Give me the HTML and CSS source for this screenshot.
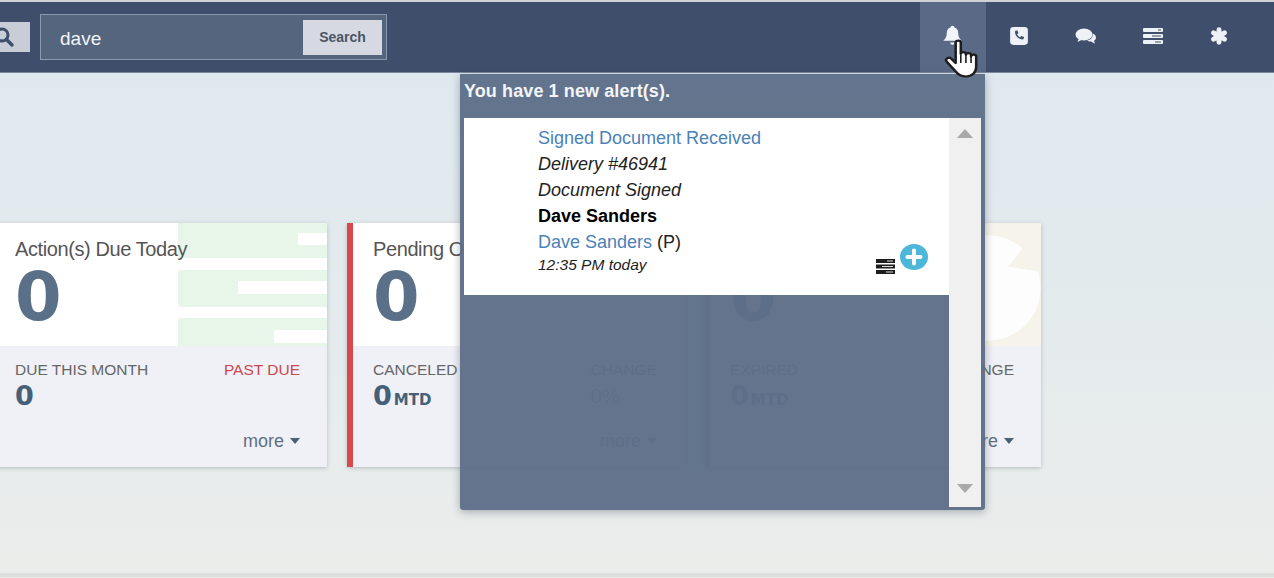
FILE: index.html
```html
<!DOCTYPE html>
<html lang="en">
<head>
    <meta charset="UTF-8">
    <meta name="viewport" content="width=device-width, initial-scale=1.0">
    <title>Dashboard</title>
    <link rel="stylesheet" href="styles.css">
</head>
<body>
    <header class="topbar">
        <div class="search-area">
            <button class="search-toggle">
                <svg width="24" height="24" viewBox="0 0 24 24"><circle cx="5" cy="10" r="6" fill="none" stroke="#3d4f6b" stroke-width="3"/><path d="M9.5 14.5L15 20" stroke="#3d4f6b" stroke-width="3.4" stroke-linecap="round"/></svg>
            </button>
            <form class="search-box">
                <span class="search-term">dave</span>
                <button class="search-button" type="button">Search</button>
            </form>
        </div>
        <nav class="top-icons">
            <a class="top-icon active">
                <svg width="23" height="23" viewBox="0 0 20 20"><path d="M10 1.5c1 0 1.6.7 1.7 1.5 2.4.7 3.3 2.7 3.3 5 0 3 1 4.500 3 6.500H2c2-2 3-3.500 3-6.500 0-2.300.9-4.300 3.300-5 .1-.8.700-1.500 1.700-1.500z" fill="#f2f4f7"/><path d="M8 16h4a2 2 0 0 1-4 0z" fill="#f2f4f7"/></svg>
            </a>
            <a class="top-icon">
                <svg width="20" height="20" viewBox="0 0 18 18"><rect x="1" y="1" width="16" height="16" rx="3" fill="#eef1f5"/><path d="M5.500 4.500l2-.6 1 2.600-1.200 1c.5 1.200 1.500 2.200 2.700 2.700l1-1.200 2.600 1-.6 2c-4 .8-8.300-3.500-7.500-7.500z" fill="#3f4f6b"/></svg>
            </a>
            <a class="top-icon">
                <svg width="22" height="18" viewBox="0 0 22 18"><ellipse cx="9" cy="7.500" rx="8.500" ry="6" fill="#eef1f5"/><path d="M4 11l-1.500 4 5-2.500z" fill="#eef1f5"/><path d="M17.500 6.500c2.500 1 3.500 2.500 3.500 4 0 1.500-.8 2.600-2 3.300l1 3-4-2.300c-1.500 0-3-.2-4-1 3.500-.5 6.500-3.500 5.500-7z" fill="#eef1f5"/></svg>
            </a>
            <a class="top-icon icon-server">
                <svg width="20" height="16" viewBox="0 0 20 16"><rect width="20" height="4" rx="1" fill="#eef1f5"/><rect y="6" width="20" height="4" rx="1" fill="#eef1f5"/><rect y="12" width="20" height="4" rx="1" fill="#eef1f5"/><path d="M15 2h3M9 8h9M12 14h6" stroke="#3f4f6b" stroke-width="1"/></svg>
            </a>
            <a class="top-icon">
                <svg width="18" height="18" viewBox="0 0 16 16"><path d="M8 2.500v11M3.200 5.200l9.600 5.600M12.800 5.200l-9.600 5.600" stroke="#eef1f5" stroke-width="4.400" stroke-linecap="round"/></svg>
            </a>
        </nav>
    </header>

    <main class="content">
        <section class="cards">
            <article class="card card-first">
                <div class="card-top">
                    <div class="card-art art-green"><i></i><i></i><i></i></div>
                    <h2 class="card-title">Action(s) Due Today</h2>
                    <div class="card-count">0</div>
                </div>
                <div class="card-bottom">
                    <div class="stats">
                        <div><div class="stat-label">DUE THIS MONTH</div><div class="stat-value">0</div></div>
                        <div class="stat-label past-due">PAST DUE</div>
                    </div>
                    <a class="more">more <span class="caret"></span></a>
                </div>
            </article>
            <article class="card card-red">
                <div class="card-top">
                    <h2 class="card-title">Pending O</h2>
                    <div class="card-count">0</div>
                </div>
                <div class="card-bottom">
                    <div class="stats">
                        <div><div class="stat-label">CANCELED</div><div class="stat-value">0<small>MTD</small></div></div>
                        <div><div class="stat-label">CHANGE</div><div class="stat-pct">0%</div></div>
                    </div>
                    <a class="more">more <span class="caret"></span></a>
                </div>
            </article>
            <article class="card card-olive">
                <div class="card-top">
                    <div class="card-art art-beige"></div>
                    <div class="card-count">0</div>
                </div>
                <div class="card-bottom">
                    <div class="stats">
                        <div><div class="stat-label">EXPIRED</div><div class="stat-value">0<small>MTD</small></div></div>
                        <div class="stat-label">CHANGE</div>
                    </div>
                    <a class="more">more <span class="caret"></span></a>
                </div>
            </article>
        </section>
    </main>
    <div class="footer-line"></div>

    <div class="alerts">
        <div class="alerts-head">You have 1 new alert(s).</div>
        <div class="alerts-body">
            <div class="alerts-list">
                <div class="alert">
                    <a class="alert-link">Signed Document Received</a>
                    <em>Delivery #46941</em>
                    <em>Document Signed</em>
                    <strong>Dave Sanders</strong>
                    <span><a class="alert-link">Dave Sanders</a> (P)</span>
                    <em class="alert-time">12:35 PM today</em>
                    <div class="alert-actions">
                        <svg width="19" height="15" viewBox="0 0 19 15"><rect width="19" height="4" fill="#1c1c1c"/><rect y="5.500" width="19" height="4" fill="#1c1c1c"/><rect y="11" width="19" height="4" fill="#1c1c1c"/><path d="M11 2h6M6 7.500h11M10 13h7" stroke="#ddd" stroke-width="1"/></svg>
                        <svg class="plus" width="28" height="26" viewBox="0 0 28 26"><ellipse cx="14" cy="13" rx="14" ry="13" fill="#4db6d9"/><path d="M14 6.500v13M7.500 13h13" stroke="#fff" stroke-width="4" stroke-linecap="round"/></svg>
                    </div>
                </div>
            </div>
            <div class="scrollbar">
                <span class="arrow-up"></span>
                <span class="arrow-down"></span>
            </div>
        </div>
    </div>

    <svg class="hand" width="41" height="42" viewBox="0 0 36 42" preserveAspectRatio="none">
        <path d="M12 26V5.500C12 3 16.500 3 16.500 5.500V17c0-2.500 4.500-2.500 4.500 0v1c0-2.500 4.500-2.500 4.500 0v1.500c0-2.500 4.500-2.500 4.500 0V30c0 5.500-3.500 9.500-9 9.500-4.500 0-6.500-1.500-9-5l-8-10c-1.700-2.500 1.800-5 4-3z" fill="#fff" stroke="#1d1d1d" stroke-width="2.200" stroke-linejoin="round"/>
        <path d="M16.500 18v8M21 18v8M25.500 19.500V26" stroke="#1d1d1d" stroke-width="1.400"/>
    </svg>
</body>
</html>
```

FILE: styles.css
```css
* {
    box-sizing: border-box;
}

body {
    margin: 0;
    height: 578px;
    overflow: hidden;
    position: relative;
    display: flex;
    flex-direction: column;
    background: linear-gradient(#dce8ef, #ebedeb);
    font-family: "Liberation Sans", Arial, sans-serif;
    color: #555;
}

.topbar {
    height: 73px;
    flex-shrink: 0;
    display: flex;
    justify-content: space-between;
    background: #3f4f6b;
    border-top: 2px solid #cfd3d8;
    border-bottom: 1px solid #7d8a9e;
}

.search-area {
    display: flex;
    align-items: center;
    gap: 10px;
    margin-left: -3px;
}

.search-toggle {
    width: 33px;
    height: 30px;
    padding: 0;
    border: none;
    background: #c8cdd8;
    display: flex;
    align-items: center;
}

.search-box {
    width: 347px;
    height: 46px;
    padding: 0 4px 0 19px;
    display: flex;
    align-items: center;
    justify-content: space-between;
    background: #56657e;
    border: 1.500px solid #8b99ae;
}

.search-term {
    padding-top: 3px;
    font-size: 19px;
    color: #f2f4f7;
}

.search-button {
    width: 79px;
    height: 35px;
    border: none;
    background: #d6d9e2;
    color: #4b5567;
    font: bold 14px "Liberation Sans", Arial, sans-serif;
}

.top-icons {
    display: flex;
    margin-right: 22px;
}

.top-icon {
    width: 66.500px;
    display: flex;
    align-items: center;
    justify-content: center;
    padding-bottom: 3px;
}

.top-icon.active {
    background: #5a6a86;
}

.icon-server {
    padding-left: 2px;
}

.content {
    flex: 1;
    padding-top: 150px;
}

.cards {
    display: flex;
    gap: 20px;
    margin-left: -10px;
}

.card {
    width: 337px;
    height: 244px;
    flex-shrink: 0;
    display: flex;
    flex-direction: column;
    background: #eff1f6;
    box-shadow: 0 1px 4px rgba(90, 100, 110, 0.35);
}

.card-red {
    border-left: 6px solid #d9484c;
}

.card-olive {
    width: 336px;
    margin-left: 1px;
    border-left: 5px solid #8f9b6a;
}

.card-top {
    height: 123px;
    padding: 15px 0 0 20px;
    position: relative;
    overflow: hidden;
    background: #fff;
}

.card-first .card-top,
.card-first .card-bottom {
    padding-left: 25px;
}

.card-art {
    position: absolute;
    top: 0;
    right: 0;
    bottom: 0;
}

.art-green {
    width: 149px;
}

.art-green i {
    display: block;
    position: absolute;
    right: 0;
    width: 149px;
    background: #e8f5e9;
}

.art-green i:nth-child(1) {
    top: 0;
    height: 35px;
    background: linear-gradient(to right, #e8f5e9 120px, #fff 120px) 0 10px / 100% 12px no-repeat, #e8f5e9;
}

.art-green i:nth-child(2) {
    top: 47px;
    height: 37px;
    border-radius: 4px 0 0 4px;
    background: linear-gradient(to right, #e8f5e9 60px, #fff 60px) 0 11px / 100% 13px no-repeat, #e8f5e9;
}

.art-green i:nth-child(3) {
    top: 95px;
    height: 28px;
    border-radius: 4px 0 0 0;
    background: linear-gradient(to right, #e8f5e9 96px, #fff 96px) 0 12px / 100% 13px no-repeat, #e8f5e9;
}

.art-beige {
    width: 140px;
    background:
        conic-gradient(from 38deg at 107px 44px, #f6f3ea 0 60deg, transparent 60deg),
        radial-gradient(circle at 87px 65px, #fdfdfd 52px, #f6f3ea 53px);
}

.card-title {
    position: relative;
    margin: 0;
    font-size: 20px;
    font-weight: normal;
    letter-spacing: -0.4px;
    color: #555;
}

.card-count {
    position: relative;
    margin-top: 0;
    font-family: "DejaVu Sans", sans-serif;
    font-size: 67px;
    font-weight: bold;
    line-height: 72px;
    color: #5a7088;
}

.card-olive .card-count {
    margin-top: 23px;
}

.card-bottom {
    flex: 1;
    padding: 15px 27px 0 20px;
    display: flex;
    flex-direction: column;
}

.stats {
    display: flex;
    justify-content: space-between;
}

.stat-label {
    font-size: 15.500px;
    line-height: 18px;
    color: #666;
}

.past-due {
    color: #c9484e;
}

.stat-value {
    height: 30px;
    margin-top: 2px;
    font-family: "DejaVu Sans", sans-serif;
    font-size: 27px;
    font-weight: bold;
    line-height: 30px;
    color: #466078;
}

.stat-value small {
    margin-left: 2px;
    font-size: 15px;
    line-height: 1;
}

.stat-pct {
    margin-top: 2px;
    font-size: 20px;
    line-height: 30px;
    color: #777;
}

.more {
    margin-top: 20px;
    align-self: flex-end;
    font-size: 18px;
    color: #5f6f80;
}

.caret {
    display: inline-block;
    margin-left: 1px;
    vertical-align: 3px;
    border: 5px solid transparent;
    border-top: 6px solid #4a6075;
    border-bottom: 0;
}

.footer-line {
    height: 4px;
    flex-shrink: 0;
    background: #dcdfde;
    margin-bottom: 1px;
}

.alerts {
    position: absolute;
    top: 74px;
    left: 460px;
    width: 525px;
    height: 436px;
    padding: 0 4px 3px 4px;
    display: flex;
    flex-direction: column;
    background: rgba(94, 110, 136, 0.96);
    border-radius: 0 0 3px 3px;
    box-shadow: 0 2px 8px rgba(60, 70, 85, 0.4);
}

.alerts-head {
    height: 44px;
    padding-top: 7px;
    flex-shrink: 0;
    font-size: 18px;
    font-weight: bold;
    letter-spacing: 0.1px;
    color: #f4f5f8;
}

.alerts-body {
    flex: 1;
    display: flex;
}

.alerts-list {
    width: 485px;
}

.alert {
    height: 177px;
    padding: 7px 0 0 74px;
    position: relative;
    display: flex;
    flex-direction: column;
    background: #fff;
    font-size: 18px;
    line-height: 26px;
    color: #222;
}

.alert strong {
    color: #000;
}

.alert-link {
    color: #4a82b8;
}

.alert-time {
    font-size: 15.500px;
    line-height: 20px;
}

.alert-actions {
    position: absolute;
    top: 126px;
    left: 412px;
    display: flex;
    align-items: flex-start;
}

.alert-actions svg:first-child {
    margin-top: 15px;
}

.alert-actions .plus {
    margin-left: 5px;
}

.scrollbar {
    width: 32px;
    padding: 11px 8px 14px;
    display: flex;
    flex-direction: column;
    justify-content: space-between;
    align-items: center;
    background: #f0f0f0;
}

.arrow-up,
.arrow-down {
    border: 8px solid transparent;
}

.arrow-up {
    border-bottom: 9px solid #a9a9a9;
    border-top: 0;
}

.arrow-down {
    border-top: 9px solid #a9a9a9;
    border-bottom: 0;
}

.hand {
    position: absolute;
    top: 37px;
    left: 942px;
}
```
